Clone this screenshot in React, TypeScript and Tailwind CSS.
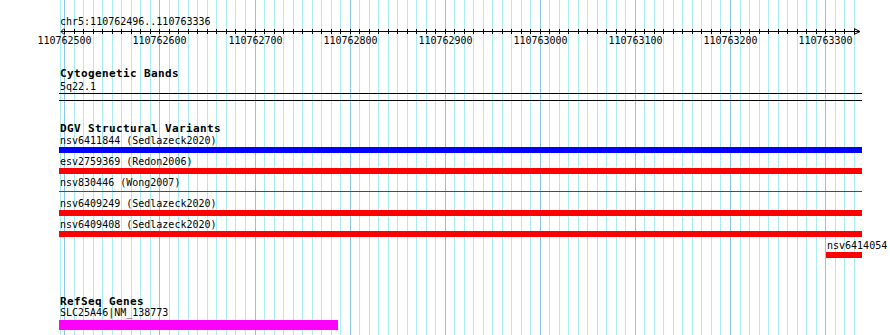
import React from "react";

const START = 110762496;
const PX0 = 64.3; // x of 110762500
const PX_PER_BP = 0.951;

const toX = (bp: number) => PX0 + (bp - 110762500) * PX_PER_BP;

const majors = Array.from({ length: 9 }, (_, i) => 110762500 + i * 100);
const minors = Array.from({ length: 84 }, (_, i) => 110762500 + i * 10).filter(
  (bp) => (bp - 110762500) % 100 !== 0
);

function Grid() {
  return (
    <svg
      className="absolute inset-0"
      width={890}
      height={335}
      shapeRendering="crispEdges"
    >
      <line x1={60.5} x2={60.5} y1={0} y2={335} stroke="#aaecf2" />
      {minors.map((bp) => {
        const x = Math.round(toX(bp)) + 0.5;
        return <line key={bp} x1={x} x2={x} y1={0} y2={335} stroke="#aaecf2" />;
      })}
      {majors.map((bp) => {
        const x = Math.round(toX(bp)) + 0.5;
        return <line key={bp} x1={x} x2={x} y1={0} y2={335} stroke="#88c6ec" />;
      })}
    </svg>
  );
}

// ruler svg sits at y=28 in the page
function Ruler() {
  const ticks = Array.from({ length: 84 }, (_, i) => 110762500 + i * 10);
  return (
    <svg width={803} height={20} className="block overflow-visible">
      <g transform="translate(-59,-28)" shapeRendering="crispEdges">
        <line x1={61} x2={860} y1={31.5} y2={31.5} stroke="#000" />
        {ticks.map((bp) => {
          const x = Math.round(toX(bp)) + 0.5;
          return <line key={bp} x1={x} x2={x} y1={29} y2={34} stroke="#000" />;
        })}
        <polyline
          points="64,28.5 61,31.5 64,34.5"
          fill="none"
          stroke="#000"
          shapeRendering="auto"
        />
        <polyline
          points="854,28.5 860,31.5 854,34.5"
          fill="none"
          stroke="#000"
          shapeRendering="auto"
        />
        {majors.map((bp) => (
          <text
            key={bp}
            x={Math.round(toX(bp)) + 0.5}
            y={44}
            textAnchor="middle"
            fontFamily="'DejaVu Sans Mono', monospace"
            fontSize={10}
            fill="#000"
          >
            {bp}
          </text>
        ))}
      </g>
    </svg>
  );
}

const label = "text-[10px] leading-[12px] text-black whitespace-nowrap pl-px";
const title =
  "text-[11px] leading-[12px] tracking-[0.38px] font-bold text-black whitespace-nowrap pl-px";

function Feature({
  name,
  color,
  thin,
  offset = 0,
  width = 803,
  mt = "mt-[3px]",
}: {
  name: string;
  color: string;
  thin?: boolean;
  offset?: number;
  width?: number;
  mt?: string;
}) {
  return (
    <div className={mt} style={{ marginLeft: offset }}>
      <div className={label}>{name}</div>
      {thin ? (
        <div className="mt-[2px] h-px" style={{ width, background: color }} />
      ) : (
        <div className="h-[6px]" style={{ width, background: color }} />
      )}
    </div>
  );
}

export default function App() {
  return (
    <div
      className="relative w-[890px] h-[335px] overflow-hidden bg-white"
      style={{ fontFamily: "'DejaVu Sans Mono', 'Liberation Mono', monospace" }}
    >
      <Grid />
      <div className="relative pl-[59px] pt-[16px]">
        <div className={label}>chr5:{START}..110763336</div>
        <Ruler />

        {/* cytogenetic bands */}
        <div className={`${title} mt-[20px]`}>Cytogenetic Bands</div>
        <div className={`${label} mt-px`}>5q22.1</div>
        <div className="h-px w-[803px] bg-black" />
        <div className="mt-[6px] h-px w-[803px] bg-black" />

        {/* DGV */}
        <div className={`${title} mt-[22px]`}>DGV Structural Variants</div>
        <Feature name="nsv6411844 (Sedlazeck2020)" color="#0000ff" mt="mt-0" />
        <Feature name="esv2759369 (Redon2006)" color="#ff0000" />
        <Feature name="nsv830446 (Wong2007)" color="#ff0000" thin />
        <Feature name="nsv6409249 (Sedlazeck2020)" color="#ff0000" mt="mt-[6px]" />
        <Feature name="nsv6409408 (Sedlazeck2020)" color="#ff0000" />
        <Feature name="nsv6414054" color="#ff0000" offset={767} width={36} />

        {/* RefSeq */}
        <div className={`${title} mt-[38px]`}>RefSeq Genes</div>
        <div className={`${label} relative z-10 -mt-px`}>SLC25A46|NM_138773</div>
        <div className="mt-px h-[10px] w-[279px] bg-[#ff00ff]" />
      </div>
    </div>
  );
}
